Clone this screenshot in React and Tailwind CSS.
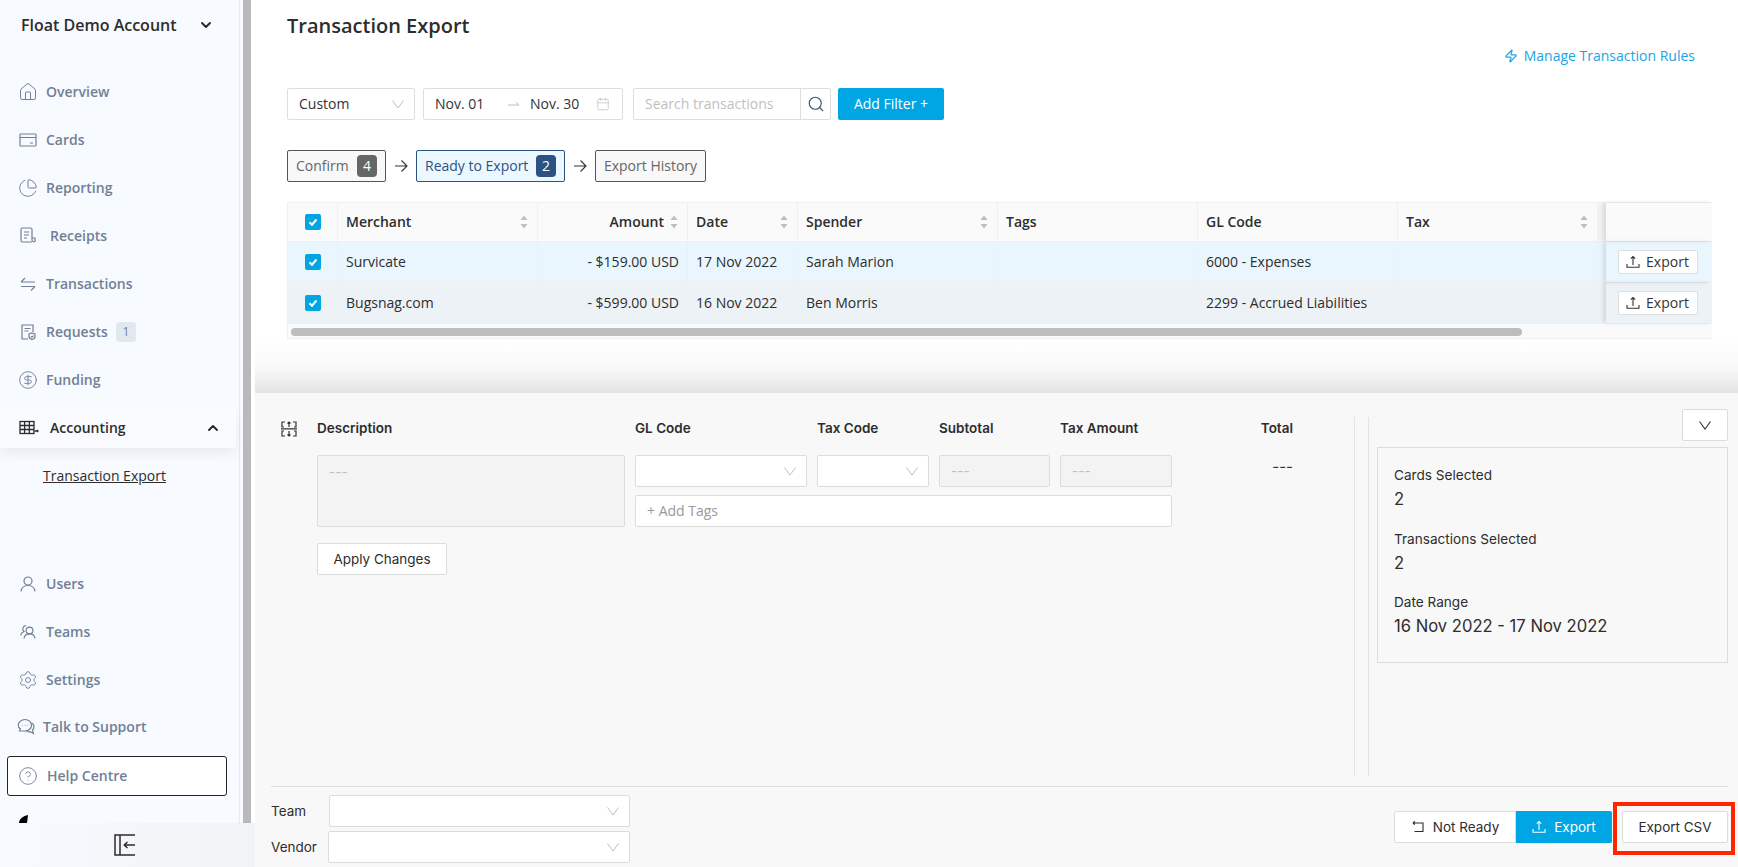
import React from "react";
import { ChevronDown, ChevronUp, ChartPie, CircleDollarSign, CircleHelp, Settings, Search, Calendar, Zap, House } from "lucide-react";

const ICON = "w-[18px] h-[18px] shrink-0 text-[#718096]";
const ICON_LG = "w-5 h-5 shrink-0 text-[#718096]";

const CardIcon = () => (
  <svg viewBox="0 0 18 18" className={ICON} fill="none" stroke="currentColor" strokeWidth="1.2">
    <rect x="1" y="3" width="16" height="12" rx="0.8" />
    <path d="M1 6.5h16M11 12h3" />
  </svg>
);
const ReceiptIcon = () => (
  <svg viewBox="0 0 18 18" className={ICON} fill="none" stroke="currentColor" strokeWidth="1.2">
    <path d="M13 15H3.5A1.5 1.5 0 0 1 2 13.5V2.5A1.5 1.5 0 0 1 3.5 1h8A1.5 1.5 0 0 1 13 2.5V13a2 2 0 0 0 3 1.5V11h-3" />
    <path d="M5 5h5M5 8h5M5 11h3" />
  </svg>
);
const TransferIcon = () => (
  <svg viewBox="0 0 18 18" className={ICON} fill="none" stroke="currentColor" strokeWidth="1.2">
    <path d="M2 7h14M2 7l4-4M16 11.5H2M16 11.5l-4 4" />
  </svg>
);
const RequestIcon = () => (
  <svg viewBox="0 0 18 18" className={ICON} fill="none" stroke="currentColor" strokeWidth="1.2">
    <path d="M9 16H3V2h11v7" />
    <path d="M5.5 5.5h6M5.5 8h4" />
    <path d="M13 10l3 1v2.5c0 1.5-1.4 2.5-3 3-1.6-.5-3-1.5-3-3V11z" />
    <path d="M11.8 13.4l1 1 1.6-1.7" />
  </svg>
);
const AccountingIcon = () => (
  <svg viewBox="0 0 20 18" className="w-5 h-[18px] text-[#2d2d2d]" fill="none" stroke="currentColor" strokeWidth="1.3">
    <rect x="1" y="2.5" width="14" height="12" />
    <path d="M1 6.5h14M1 10.5h14M5.6 2.5v12M10.3 2.5v12M15.5 12h3.5" />
    <path d="M18 11l1 1-1 1" />
  </svg>
);
const UserIcon = () => (
  <svg viewBox="0 0 18 18" className={ICON} fill="none" stroke="currentColor" strokeWidth="1.2">
    <circle cx="9" cy="6" r="4" />
    <path d="M2 16.5c.5-3.5 3-6 7-6s6.5 2.5 7 6" />
  </svg>
);
const TeamIcon = () => (
  <svg viewBox="0 0 18 18" className={ICON} fill="none" stroke="currentColor" strokeWidth="1.2">
    <circle cx="10.5" cy="7.5" r="3.4" />
    <path d="M5 15.5c.4-2.800 2.500-4.600 5.500-4.600s5.100 1.800 5.500 4.600" />
    <path d="M7 2.600A3.300 3.300 0 0 0 5 8.500c-1.800.6-3 2-3.500 3.800" />
  </svg>
);
const ChatIcon = () => (
  <svg viewBox="0 0 18 18" className={ICON} fill="none" stroke="currentColor" strokeWidth="1.2">
    <path d="M8 1.500c3.600 0 6.500 2.500 6.500 5.700S11.600 13 8 13H2.500l1-2C2 10 1.300 8.700 1.300 7.200 1.300 4 4.400 1.500 8 1.500z" />
    <path d="M15 5c1.300 1 2 2.300 2 3.700 0 1.300-.5 2.400-1.500 3.300l.9 3.500-3.400-1.900c-1.200.3-2.600.2-3.500-.5" />
    <path d="M5.500 7.300h.5M7.800 7.300h.5M10 7.300h.5" />
  </svg>
);
const UploadIcon = ({ className }) => (
  <svg viewBox="0 0 14 14" className={className} fill="none" stroke="currentColor" strokeWidth="1.100">
    <path d="M7 1.500V10M4.800 3.700 7 1.500l2.200 2.200M1 9v3.200h12V9" />
  </svg>
);
const Caret = ({ className = "" }) => (
  <svg viewBox="0 0 14 14" className={`w-3.5 h-3.5 text-[#bfbfbf] ${className}`} fill="none" stroke="currentColor" strokeWidth="1">
    <path d="M1.500 3.500 7 11l5.500-7.500" />
  </svg>
);
const Sort = () => (
  <svg viewBox="0 0 8 16" className="w-2 h-4 text-[#bfbfbf] shrink-0" fill="currentColor">
    <path d="M4 1.500 7.500 6h-7zM4 14.500.5 10h7z" />
  </svg>
);
const StepArrow = () => (
  <svg viewBox="0 0 14 14" className="w-3.5 h-3.5 text-[#333]" fill="none" stroke="currentColor" strokeWidth="1.100">
    <path d="M1 7h12M7.500 1.500 13 7l-5.500 5.500" />
  </svg>
);
const Tick = () => (
  <span className="w-4 h-4 rounded-[2px] bg-[#00a6e3] flex items-center justify-center">
    <svg viewBox="0 0 12 12" className="w-3 h-3" fill="none" stroke="white" strokeWidth="2">
      <path d="M2.500 6.200 5 8.700 9.500 3.500" />
    </svg>
  </span>
);

const NAV_TOP = [
  { label: "Overview", icon: <House className={ICON_LG} strokeWidth={1.2} /> },
  { label: "Cards", icon: <CardIcon /> },
  { label: "Reporting", icon: <ChartPie className={ICON_LG} strokeWidth={1.2} /> },
  { label: "Receipts", icon: <ReceiptIcon />, indent: true },
  { label: "Transactions", icon: <TransferIcon /> },
  { label: "Requests", icon: <RequestIcon />, badge: "1" },
  { label: "Funding", icon: <CircleDollarSign className={ICON_LG} strokeWidth={1.1} /> },
];
const NAV_BOTTOM = [
  { label: "Users", icon: <UserIcon /> },
  { label: "Teams", icon: <TeamIcon /> },
  { label: "Settings", icon: <Settings className={ICON_LG} strokeWidth={1.1} /> },
];

function NavRow({ item }) {
  return (
    <div className="h-12 flex items-center pl-[19px] text-sm font-semibold text-[#718096]">
      <span className="w-[18px] flex justify-center">{item.icon}</span>
      <span className={item.indent ? "ml-[13px]" : "ml-[9px]"}>{item.label}</span>
      {item.badge && (
        <span className="ml-2 w-5 h-5 rounded-[3px] bg-[#e2e8f0] flex items-center justify-center text-xs font-normal">
          {item.badge}
        </span>
      )}
    </div>
  );
}

function Sidebar() {
  return (
    <div className="w-[255px] shrink-0 h-full flex flex-col bg-[#f7fafe] font-['Open_Sans',sans-serif]">
      <div className="h-[823px] flex">
        <div className="w-[240px] shrink-0 border-r border-[#e6e9ee]">
          <div className="h-[50px] flex items-center justify-between pl-[21px] pr-[25px] text-base font-semibold text-[#2d2d2d]">
            <span>Float Demo Account</span>
            <ChevronDown className="w-4 h-4" strokeWidth={3} />
          </div>
          <div className="mt-[18px]">
            {NAV_TOP.map((item) => (
              <NavRow key={item.label} item={item} />
            ))}
          </div>
          <div className="mt-1 w-[236px] h-10 bg-[#f9fbfe] shadow-[0_6px_12px_rgba(0,0,0,0.06)] rounded-r-[3px] flex items-center justify-between pl-[19px] pr-[15px] text-sm font-semibold text-[#2d2d2d]">
            <span className="flex items-center gap-[11px]">
              <AccountingIcon />
              Accounting
            </span>
            <ChevronUp className="w-4 h-4" strokeWidth={3} />
          </div>
          <div className="mt-[17px] pl-[43px] h-[22px] leading-[22px] text-sm text-[#2d2d2d] underline">Transaction Export</div>
          <div className="mt-[73px]">
            {NAV_BOTTOM.map((item) => (
              <NavRow key={item.label} item={item} />
            ))}
          </div>
          <div className="-mt-px h-12 flex items-center pl-[17px] gap-2 text-sm font-semibold text-[#718096]">
            <ChatIcon />
            Talk to Support
          </div>
          <div className="mt-[5px] ml-[7px] w-[220px] h-10 bg-white border border-[#222] rounded-[3px] flex items-center pl-[10px] gap-[9px] text-sm font-semibold text-[#718096]">
            <CircleHelp className={ICON_LG} strokeWidth={1.1} />
            Help Centre
          </div>
          <svg viewBox="0 0 10 8" className="mt-[19px] ml-[19px] w-[10px] h-2" fill="black">
            <path d="M0 8C0 4 4 1 9 0L8 8z" />
          </svg>
        </div>
        <div className="w-[3px]" />
        <div className="w-2 h-full bg-[#b9b9b9]" />
        <div className="w-1 bg-white" />
      </div>
      <div className="flex-1 flex items-center justify-center pr-[5px] bg-gradient-to-r from-[#f7fafe] to-[#f1f3f6]">
        <svg viewBox="0 0 22 22" className="w-[22px] h-[22px] text-[#2d2d2d]" fill="none" stroke="currentColor" strokeWidth="1.500">
          <path d="M21 1H1v20h20M6 1v20M21 11H10M10 11l3.500-3M10 11l3.500 3" />
        </svg>
      </div>
    </div>
  );
}

const CELL = "flex items-center px-2 border-r border-[#f0f0f0]";
const TABLE_GRID = "grid grid-cols-[50px_200px_150px_110px_200px_200px_200px_200px_8px_106px]";

function HeaderRow() {
  return (
    <div className={`${TABLE_GRID} h-[39px] bg-[#fafafa] border-b border-[#f0f0f0] font-semibold text-[#2d2d2d]`}>
      <div className={`${CELL} pl-[17px]`}><Tick /></div>
      <div className={`${CELL} justify-between pr-[9px]`}>Merchant<Sort /></div>
      <div className={`${CELL} justify-end gap-[6px] pr-[9px]`}>Amount<Sort /></div>
      <div className={`${CELL} justify-between pr-[9px]`}>Date<Sort /></div>
      <div className={`${CELL} justify-between pr-[9px]`}>Spender<Sort /></div>
      <div className={CELL}>Tags</div>
      <div className={CELL}>GL Code</div>
      <div className={`${CELL} justify-between pr-[9px]`}>Tax<Sort /></div>
      <div className="bg-[#f2f2f2]" />
      <div className="shadow-[-3px_0_4px_rgba(0,0,0,0.1)]" />
    </div>
  );
}

function DataRow({ row }) {
  return (
    <div className={`${TABLE_GRID} h-[41px] ${row.bg} border-b border-[#f0f0f0] text-[#2d2d2d]`}>
      <div className={`${CELL} pl-[17px]`}><Tick /></div>
      <div className={CELL}>{row.merchant}</div>
      <div className={`${CELL} justify-end`}>{row.amount}</div>
      <div className={CELL}>{row.date}</div>
      <div className={CELL}>{row.spender}</div>
      <div className={CELL} />
      <div className={CELL}>{row.gl}</div>
      <div className={CELL} />
      <div />
      <div className="flex items-center justify-center pr-[3px] shadow-[-3px_0_4px_rgba(0,0,0,0.1)]">
        <button className="w-20 h-6 bg-white border border-[#dedede] rounded-[2px] flex items-center justify-center gap-[6px] text-[#333]">
          <UploadIcon className="w-3.5 h-3.5" />
          Export
        </button>
      </div>
    </div>
  );
}

const ROWS = [
  { merchant: "Survicate", amount: "- $159.00 USD", date: "17 Nov 2022", spender: "Sarah Marion", gl: "6000 - Expenses", bg: "bg-[#e9f6fe]" },
  { merchant: "Bugsnag.com", amount: "- $599.00 USD", date: "16 Nov 2022", spender: "Ben Morris", gl: "2299 - Accrued Liabilities", bg: "bg-[#edf2f7]" },
];

function TopSection() {
  return (
    <div className="pl-8 pr-[27px] pt-3 font-['Open_Sans',sans-serif] text-sm">
      <h1 className="h-7 leading-7 text-xl font-semibold text-[#2d2d2d]">Transaction Export</h1>
      <div className="mt-1 h-6 flex items-center justify-end pr-[17px] gap-[6px] text-[#1aa5e4]">
        <Zap className="w-3.5 h-3.5" strokeWidth={2} />
        Manage Transaction Rules
      </div>

      <div className="mt-5 h-8 flex text-[#333]">
        <div className="w-[128px] bg-white border border-[#dedede] rounded-[2px] flex items-center justify-between pl-[11px] pr-[9px]">
          Custom
          <Caret />
        </div>
        <div className="ml-2 w-[200px] bg-white border border-[#dedede] rounded-[2px] flex items-center pl-[11px] pr-3">
          <span className="w-[73px]">Nov. 01</span>
          <svg viewBox="0 0 12 8" className="w-3 h-2 text-[#bfbfbf]" fill="none" stroke="currentColor">
            <path d="M0 5h11L8 2" />
          </svg>
          <span className="ml-[10px] flex-1">Nov. 30</span>
          <Calendar className="w-3.5 h-3.5 text-[#bfbfbf]" strokeWidth={1.3} />
        </div>
        <div className="ml-[10px] w-[198px] bg-white border border-[#dedede] rounded-[2px] flex items-center">
          <span className="flex-1 pl-[11px] text-[#bfbfbf]">Search transactions</span>
          <span className="w-[30px] h-full border-l border-[#dedede] flex items-center justify-center">
            <Search className="w-[18px] h-[18px] text-[#3d5a73]" strokeWidth={1.5} />
          </span>
        </div>
        <button className="ml-[7px] w-[106px] bg-[#00a6e3] text-white rounded-[2px] flex items-center justify-center">Add Filter +</button>
      </div>

      <div className="mt-[30px] h-8 flex items-center">
        <div className="w-[99px] h-full border border-[#555] rounded-[2px] bg-[#f8f8f8] text-[#666] flex items-center justify-between pl-2 pr-[8px]">
          Confirm
          <span className="w-5 h-[22px] rounded-[4px] bg-[#666] text-white flex items-center justify-center">4</span>
        </div>
        <span className="w-[30px] flex justify-center"><StepArrow /></span>
        <div className="w-[149px] h-full border border-[#2c5282] rounded-[2px] bg-[#ebf8ff] text-[#2c5282] flex items-center justify-between pl-2 pr-[8px]">
          Ready to Export
          <span className="w-5 h-[22px] rounded-[4px] bg-[#2c5282] text-white flex items-center justify-center">2</span>
        </div>
        <span className="w-[30px] flex justify-center"><StepArrow /></span>
        <div className="w-[111px] h-full border border-[#555] rounded-[2px] bg-[#f8f8f8] text-[#666] flex items-center justify-center">Export History</div>
      </div>

      <div className="mt-5 border border-[#f0f0f0] border-r-0">
        <HeaderRow />
        {ROWS.map((row) => (
          <DataRow key={row.merchant} row={row} />
        ))}
        <div className="h-[14px] bg-[#fafafa] pt-[4px] pl-[3px]">
          <div className="w-[1231px] h-2 rounded bg-[#bdbdbd]" />
        </div>
      </div>
    </div>
  );
}

const FIELD = "border border-[#dcdcdc] rounded-[2px] h-8";

function EditForm() {
  return (
    <div className="w-[1100px] h-[359px] border-r border-[#e3e3e3] pl-[26px] flex mt-2">
      <svg viewBox="0 0 16 16" className="w-4 h-4 mt-[4px] text-[#333]" fill="none" stroke="currentColor" strokeWidth="1.200">
        <path d="M0 7.800h16M3 6H1V1h3M13 6h2V1h-3M3 10H1v5h3M13 10h2v5h-3M8 1v5M6.500 2.500 8 1l1.500 1.500M8 10v5M6.500 13.500 8 15l1.500-1.500" />
      </svg>
      <div className="ml-5">
        <div className="grid grid-cols-[308px_172px_112px_111px_112px_111px] grid-rows-[22px_32px_32px] gap-x-[10px] gap-y-2 text-[13.5px] font-semibold text-[#2d2d2d]">
          <div className="flex items-center">Description</div>
          <div className="flex items-center">GL Code</div>
          <div className="flex items-center">Tax Code</div>
          <div className="flex items-center">Subtotal</div>
          <div className="flex items-center">Tax Amount</div>
          <div className="flex items-center justify-end">Total</div>

          <div className="mt-2 row-span-2 h-[72px] border border-[#dcdcdc] rounded-[2px] bg-[#f3f3f3] px-[11px] py-[6px] font-normal text-[#bfbfbf]">---</div>
          <div className={`mt-2 ${FIELD} bg-white flex items-center justify-end pr-[9px]`}><Caret /></div>
          <div className={`mt-2 ${FIELD} bg-white flex items-center justify-end pr-[9px]`}><Caret /></div>
          <div className={`mt-2 ${FIELD} bg-[#f3f3f3] flex items-center pl-[11px] font-normal text-[#bfbfbf]`}>---</div>
          <div className={`mt-2 ${FIELD} bg-[#f3f3f3] flex items-center pl-[11px] font-normal text-[#bfbfbf]`}>---</div>
          <div className="mt-[9px] text-right font-normal text-[15px] text-[#333]">---</div>

          <div className={`mt-2 col-start-2 col-span-4 ${FIELD} bg-white flex items-center pl-[11px] font-['Open_Sans',sans-serif] text-sm font-normal text-[#999]`}>+ Add Tags</div>
        </div>
        <button className="mt-6 w-[130px] h-8 bg-white border border-[#dcdcdc] rounded-[2px] text-[13.5px] text-[#2d2d2d]">Apply Changes</button>
      </div>
    </div>
  );
}

function SummaryPanel() {
  const items = [
    ["Cards Selected", "2"],
    ["Transactions Selected", "2"],
    ["Date Range", "16 Nov 2022 - 17 Nov 2022"],
  ];
  return (
    <div className="flex-1 ml-2 mr-[11px]">
      <div className="flex justify-end">
        <button className={`w-[46px] ${FIELD} bg-white flex items-center justify-center`}>
          <svg viewBox="0 0 14 14" className="w-3.5 h-3.5 text-[#333]" fill="none" stroke="currentColor" strokeWidth="1.100">
            <path d="M1.500 3.500 7 11l5.500-7.500" />
          </svg>
        </button>
      </div>
      <div className="mt-[6px] h-[216px] border border-[#dcdcdc] pl-4 pt-[17px] text-[#2d2d2d]">
        {items.map(([label, value]) => (
          <div key={label} className="h-[63.5px]">
            <div className="h-5 leading-5 text-[13.6px]">{label}</div>
            <div className="mt-[4px] h-5 leading-5 text-[16.6px]">{value}</div>
          </div>
        ))}
      </div>
    </div>
  );
}

function Footer() {
  return (
    <div className="h-[81px] mx-[11px] ml-4 border-t border-[#dedede] pt-2 flex justify-between text-[13.5px] text-[#2d2d2d]">
      <div className="flex flex-col gap-[4px]">
        <div className="flex items-center h-8">
          <span className="w-[58px]">Team</span>
          <div className={`w-[301px] ${FIELD} bg-white flex items-center justify-end pr-[9px]`}><Caret /></div>
        </div>
        <div className="flex items-center h-8">
          <span className="w-[57px]">Vendor</span>
          <div className={`w-[302px] ${FIELD} bg-white flex items-center justify-end pr-[9px]`}><Caret /></div>
        </div>
      </div>
      <div className="relative flex items-center h-[66px] pb-[2px]">
        <button className="w-[122px] h-8 bg-white border border-[#dcdcdc] rounded-l-[2px] flex items-center justify-center gap-2">
          <svg viewBox="0 0 14 14" className="w-3.5 h-3.5" fill="none" stroke="currentColor" strokeWidth="1.100">
            <path d="M2 3h10v8.500H3.500M2 3l1.800-1.700M2 3l1.800 1.700" />
          </svg>
          Not Ready
        </button>
        <button className="w-24 h-8 bg-[#00a6e3] text-white rounded-r-[2px] flex items-center justify-center gap-2">
          <UploadIcon className="w-3.5 h-3.5" />
          Export
        </button>
        <button className="ml-[10px] w-[106px] h-8 bg-white border border-[#dcdcdc] rounded-[2px]">Export CSV</button>
        <div className="absolute right-[-7px] top-[7px] w-[122px] h-[53px] border-4 border-[#ff2600]" />
      </div>
    </div>
  );
}

export default function App() {
  return (
    <div className="w-[1738px] h-[867px] flex overflow-hidden bg-white">
      <Sidebar />
      <div className="flex-1 flex flex-col">
        <TopSection />
        <div className="h-[54px] bg-gradient-to-b from-white via-[#fafafa] to-[#e4e4e4]" />
        <div className="flex-1 bg-[#f8f8f8] font-['Inter',sans-serif] flex flex-col">
          <div className="flex-1 flex pt-4">
            <div><EditForm /></div>
            <div className="w-[14px] h-[359px] mt-2 border-r border-[#e3e3e3]" />
            <SummaryPanel />
          </div>
          <Footer />
        </div>
      </div>
    </div>
  );
}
